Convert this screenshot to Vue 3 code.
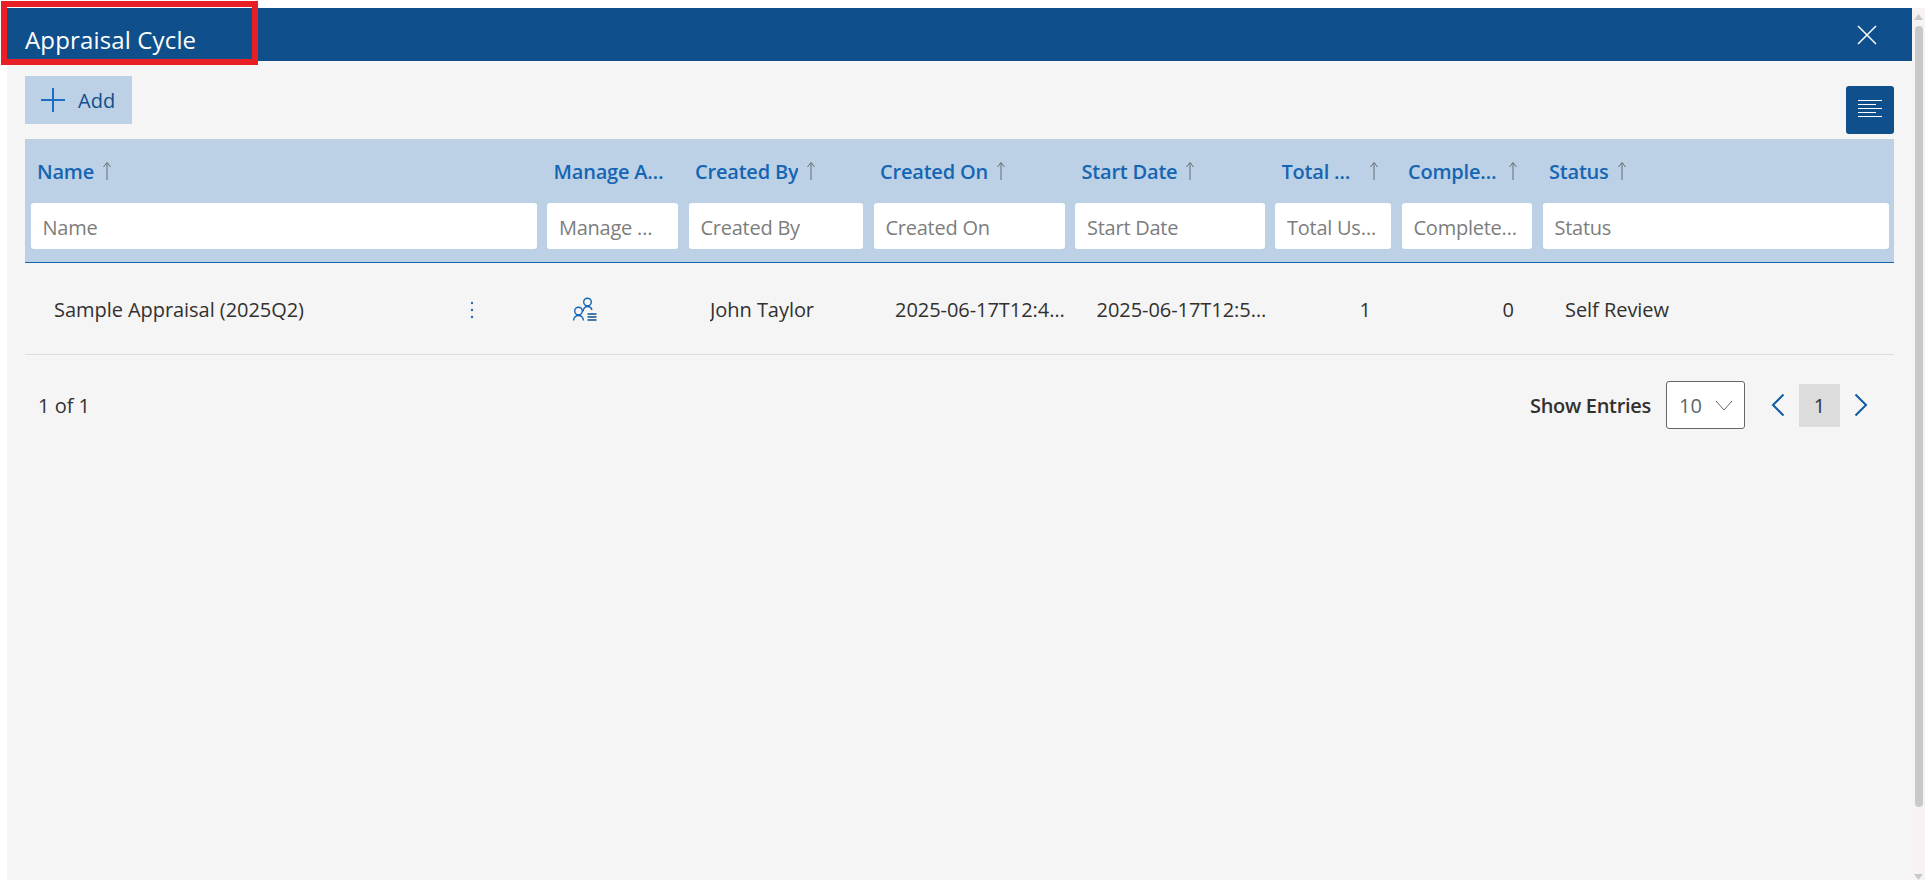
<template>
  <div class="page">
    <div class="dialog">
      <div class="dialog-head">
        <span class="dialog-title">Appraisal Cycle</span>
        <button class="close-btn" aria-label="Close">
          <svg width="20" height="20" viewBox="0 0 20 20"><path d="M1 1 L19 19 M19 1 L1 19" stroke="#fff" stroke-width="1.5" fill="none" /></svg>
        </button>
      </div>

      <div class="body">
        <div class="toolbar">
          <button class="add-btn">
            <svg width="24" height="24" viewBox="0 0 24 24"><path d="M0 12 H24 M12 0 V24" stroke="#1b6ec2" stroke-width="2" fill="none" /></svg>
            <span>Add</span>
          </button>
          <button class="menu-btn" aria-label="Columns">
            <svg width="24" height="20" viewBox="0 0 24 20"><path d="M0 0.5 H24 M0 4.5 H18 M0 8.5 H24 M0 12.5 H18 M0 16.5 H24" stroke="#fff" stroke-width="1" fill="none" /></svg>
          </button>
        </div>

        <div class="grid-head">
          <div class="row-titles cols">
            <div v-for="c in columns" :key="c.key" class="title-cell">
              <span class="title-text" :style="{ maxWidth: c.titleWidth + 'px' }">{{ c.label }}</span>
              <svg v-if="c.sort" class="sort" :class="{ far: c.farSort }" width="10" height="20" viewBox="0 0 10 20"><path d="M5 19 V2 M1.5 6 L5 1.5 L8.5 6" stroke="#666c72" stroke-width="1" fill="none" /></svg>
            </div>
          </div>
          <div class="row-filters cols">
            <div v-for="c in columns" :key="c.key" class="filter-cell">
              <input class="filter" :class="{ tight: c.key === 'manage' }" type="text" :placeholder="c.label" />
            </div>
          </div>
        </div>

        <div v-for="r in rows" :key="r.name" class="data-row cols">
          <div class="cell name-cell">
            <span>{{ r.name }}</span>
            <svg class="dots" width="4" height="18" viewBox="0 0 4 18"><circle cx="2" cy="2" r="1.2" fill="#1b6ec2" /><circle cx="2" cy="9" r="1.2" fill="#1b6ec2" /><circle cx="2" cy="16" r="1.2" fill="#1b6ec2" /></svg>
          </div>
          <div class="cell icon-cell">
            <svg width="26" height="26" viewBox="0 0 26 26" fill="none">
              <circle cx="15.5" cy="5" r="3.8" stroke="#1565b4" stroke-width="1.4" />
              <path d="M11 14.5 C11.5 11 13 9.5 15.5 9.5 C18 9.5 19.5 11 20 13" stroke="#1565b4" stroke-width="1.4" />
              <circle cx="6.5" cy="14" r="3.8" stroke="#1565b4" stroke-width="1.4" />
              <path d="M1.5 23.5 C2 20 4 18.5 6.5 18.5 C9 18.5 11 20 11.5 23.5" stroke="#1565b4" stroke-width="1.4" />
              <path d="M15.5 17 H24.5 M15.5 20 H24.5 M15.5 23 H24.5" stroke="#0f4f8b" stroke-width="1.4" />
            </svg>
          </div>
          <div class="cell"><span class="clip">{{ r.createdBy }}</span></div>
          <div class="cell"><span class="clip">{{ r.createdOn }}</span></div>
          <div class="cell"><span class="clip">{{ r.startDate }}</span></div>
          <div class="cell num">{{ r.total }}</div>
          <div class="cell num done">{{ r.completed }}</div>
          <div class="cell status-cell"><span class="clip">{{ r.status }}</span></div>
        </div>

        <div class="pager">
          <span class="count">1 of 1</span>
          <div class="pager-right">
            <span class="entries-label">Show Entries</span>
            <div class="entries-select">
              <span>10</span>
              <svg width="18" height="11" viewBox="0 0 18 11"><path d="M1 1 L9 10 L17 1" stroke="#5b6670" stroke-width="1" fill="none" /></svg>
            </div>
            <svg class="prev" width="14" height="24" viewBox="0 0 14 24"><path d="M12.5 1.5 L2 12 L12.5 22.5" stroke="#0f5ca3" stroke-width="2" fill="none" /></svg>
            <span class="page-no">1</span>
            <svg class="next" width="14" height="24" viewBox="0 0 14 24"><path d="M1.5 1.5 L12 12 L1.5 22.5" stroke="#0f5ca3" stroke-width="2" fill="none" /></svg>
          </div>
        </div>
      </div>
    </div>

    <div class="scrollbar">
      <svg class="sb-arrow" width="9" height="6" viewBox="0 0 9 6"><path d="M4.5 0 L9 6 H0 Z" fill="#c9c9c9" /></svg>
      <div class="sb-thumb"></div>
      <svg class="sb-arrow sb-down" width="9" height="6" viewBox="0 0 9 6"><path d="M0 0 H9 L4.5 6 Z" fill="#c9c9c9" /></svg>
    </div>

    <!-- annotation box over the title -->
    <div class="highlight"></div>
  </div>
</template>

<script setup>
const columns = [
  { key: 'name', label: 'Name', sort: true, titleWidth: 200 },
  { key: 'manage', label: 'Manage Appraisal', sort: false, titleWidth: 116 },
  { key: 'by', label: 'Created By', sort: true, titleWidth: 130 },
  { key: 'on', label: 'Created On', sort: true, titleWidth: 130 },
  { key: 'start', label: 'Start Date', sort: true, titleWidth: 130 },
  { key: 'total', label: 'Total Users', sort: true, farSort: true, titleWidth: 71 },
  { key: 'done', label: 'Completed Users', sort: true, titleWidth: 92 },
  { key: 'status', label: 'Status', sort: true, titleWidth: 200 },
]

const rows = [
  {
    name: 'Sample Appraisal (2025Q2)',
    createdBy: 'John Taylor',
    createdOn: '2025-06-17T12:45:10',
    startDate: '2025-06-17T12:50:00',
    total: 1,
    completed: 0,
    status: 'Self Review',
  },
]
</script>

<style>
html, body {
  margin: 0;
  background: #fff;
  overflow: hidden;
}
</style>

<style scoped>
.page {
  position: relative;
  display: flex;
  height: 872px;
  padding: 8px 0 0 7px;
  font-family: "Open Sans", "Noto Sans", sans-serif;
  color: #323130;
  font-size: 20px;
}
.dialog {
  flex: 1;
  min-width: 0;
  background: #f5f5f5;
}
.dialog-head {
  height: 53px;
  background: #0f4f8b;
  display: flex;
  align-items: center;
  justify-content: space-between;
}
.dialog-title {
  margin-left: 18px;
  padding-top: 9px;
  color: #fff;
  font-size: 24px;
  letter-spacing: 0.15px;
}
.close-btn {
  display: flex;
  margin-right: 35px;
  padding: 0;
  border: 0;
  background: none;
}
.body {
  padding: 15px 18px 0;
}
.toolbar {
  height: 63px;
  display: flex;
  justify-content: space-between;
  align-items: flex-start;
}
.add-btn {
  width: 107px;
  height: 48px;
  display: flex;
  align-items: center;
  gap: 13px;
  padding: 0 0 0 16px;
  border: 0;
  background: #bcd1e5;
  color: #0f4f8b;
  font: inherit;
  font-size: 20px;
}
.menu-btn {
  width: 48px;
  height: 48px;
  margin-top: 10px;
  display: flex;
  align-items: center;
  justify-content: center;
  padding: 0;
  border: 0;
  border-radius: 3px;
  background: #0f4f8b;
}
.cols {
  display: grid;
  grid-template-columns: 516.5px 141.5px 185px 201.5px 200px 126.5px 141px 1fr;
}
.grid-head {
  background: #bcd1e5;
  border-bottom: 1px solid #1565b4;
  height: 123px;
}
.row-titles {
  height: 64px;
}
.title-cell {
  display: flex;
  align-items: center;
  gap: 8px;
  padding: 0 0 0 12px;
  min-width: 0;
  color: #1565b4;
  font-weight: 600;
  font-size: 20px;
  letter-spacing: -0.2px;
}
.title-text {
  white-space: nowrap;
  overflow: hidden;
  text-overflow: ellipsis;
}
.sort.far {
  margin-left: 8px;
}
.filter-cell {
  padding: 0 0 0 5.5px;
  min-width: 0;
}
.filter-cell:last-child {
  padding-right: 5px;
}
.filter {
  box-sizing: border-box;
  width: calc(100% - 5px);
  height: 46px;
  padding: 2px 5px 0 12px;
  border: 0;
  border-radius: 3px;
  background: #fff;
  font: inherit;
  font-size: 20px;
  letter-spacing: -0.25px;
  color: #323130;
  text-overflow: ellipsis;
  outline: none;
}
.filter.tight {
  padding-right: 18px;
}
.filter-cell:last-child .filter {
  width: 100%;
}
.filter::placeholder {
  color: #7d7d7d;
  opacity: 1;
}
.data-row {
  height: 92px;
  padding-top: 2px;
  box-sizing: border-box;
  align-items: center;
  border-bottom: 1px solid #dedede;
  letter-spacing: -0.05px;
}
.cell {
  padding: 0 2px 0 27px;
  min-width: 0;
  white-space: nowrap;
}
.clip {
  display: block;
  overflow: hidden;
  text-overflow: ellipsis;
}
.name-cell {
  display: flex;
  align-items: center;
  justify-content: space-between;
  padding: 0 68px 0 29px;
}
.icon-cell {
  display: flex;
  padding: 0 0 0 30px;
}
.num {
  padding-right: 25px;
  text-align: right;
}
.num.done {
  padding-right: 23px;
}
.status-cell {
  padding-left: 28px;
}
.pager {
  height: 100px;
  padding: 0 13px;
  display: flex;
  align-items: center;
  justify-content: space-between;
}
.pager-right {
  display: flex;
  align-items: center;
  padding-right: 13px;
}
.entries-label {
  font-weight: 600;
  letter-spacing: -0.3px;
}
.entries-select {
  box-sizing: border-box;
  width: 79px;
  height: 48px;
  margin-left: 15px;
  padding: 0 11px 0 12px;
  display: flex;
  align-items: center;
  justify-content: space-between;
  border: 1px solid #666;
  border-radius: 3px;
  background: #fff;
  color: #5b6670;
}
.prev {
  margin-left: 26px;
}
.page-no {
  width: 41px;
  height: 43px;
  margin: 0 14px;
  display: flex;
  align-items: center;
  justify-content: center;
  background: #dcdcdc;
}
.scrollbar {
  flex: none;
  width: 13px;
  display: flex;
  flex-direction: column;
  align-items: center;
  background: #f6f3f2;
}
.sb-arrow {
  margin-top: 6px;
}
.sb-thumb {
  width: 8px;
  height: 781px;
  margin-top: 6px;
  border-radius: 4px;
  background: #c9c9c9;
}
.sb-down {
  margin-top: auto;
  margin-bottom: 0;
}
.highlight {
  position: absolute;
  left: 1px;
  top: 1px;
  box-sizing: border-box;
  width: 257px;
  height: 64px;
  border: 6px solid #e81f25;
  pointer-events: none;
}
</style>
